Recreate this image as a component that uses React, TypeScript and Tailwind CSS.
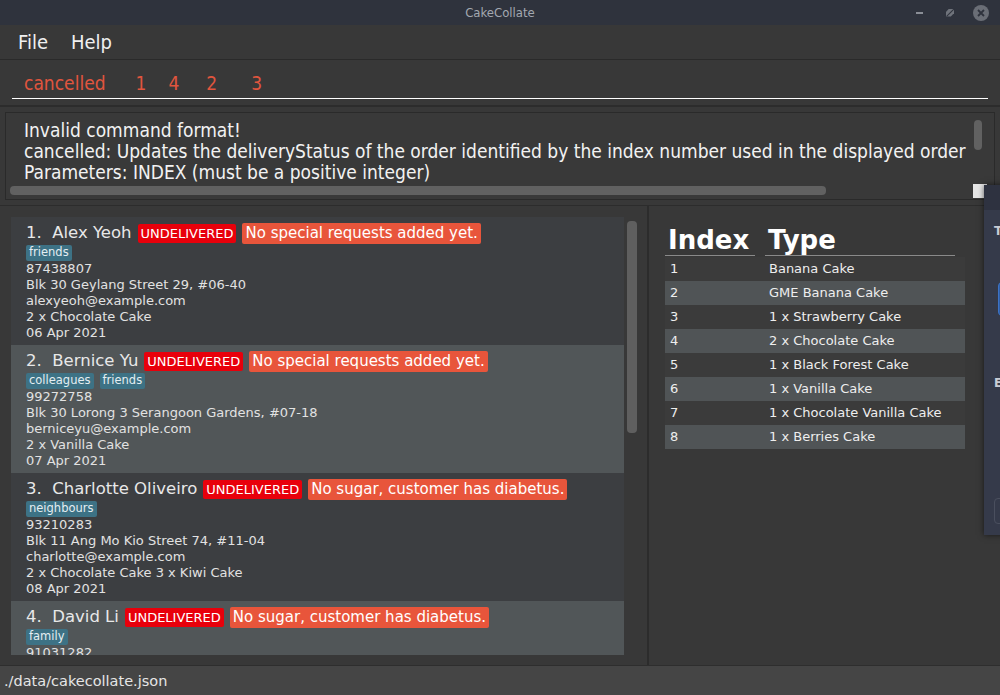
import React from "react";

const persons = [
  {
    n: 1,
    name: "Alex Yeoh",
    req: "No special requests added yet.",
    tags: ["friends"],
    phone: "87438807",
    addr: "Blk 30 Geylang Street 29, #06-40",
    email: "alexyeoh@example.com",
    order: "2 x Chocolate Cake",
    date: "06 Apr 2021",
  },
  {
    n: 2,
    name: "Bernice Yu",
    req: "No special requests added yet.",
    tags: ["colleagues", "friends"],
    phone: "99272758",
    addr: "Blk 30 Lorong 3 Serangoon Gardens, #07-18",
    email: "berniceyu@example.com",
    order: "2 x Vanilla Cake",
    date: "07 Apr 2021",
  },
  {
    n: 3,
    name: "Charlotte Oliveiro",
    req: "No sugar, customer has diabetus.",
    tags: ["neighbours"],
    phone: "93210283",
    addr: "Blk 11 Ang Mo Kio Street 74, #11-04",
    email: "charlotte@example.com",
    order: "2 x Chocolate Cake 3 x Kiwi Cake",
    date: "08 Apr 2021",
  },
  {
    n: 4,
    name: "David Li",
    req: "No sugar, customer has diabetus.",
    tags: ["family"],
    phone: "91031282",
    addr: "Blk 436 Serangoon Gardens Street 26, #16-43",
    email: "lidavid@example.com",
    order: "1 x Chocolate Cake",
    date: "09 Apr 2021",
  },
];

const items = [
  "Banana Cake",
  "GME Banana Cake",
  "1 x Strawberry Cake",
  "2 x Chocolate Cake",
  "1 x Black Forest Cake",
  "1 x Vanilla Cake",
  "1 x Chocolate Vanilla Cake",
  "1 x Berries Cake",
];

const ubuntu = "font-['DejaVu_Sans_Condensed','Liberation_Sans_Narrow','Liberation_Sans',sans-serif]";
const dejavu = "font-['DejaVu_Sans','Verdana',sans-serif]";

function Card({ p, even }: { p: (typeof persons)[number]; even: boolean }) {
  return (
    <div className={`h-[128px] shrink-0 pl-[15px] pt-[5px] ${even ? "bg-[#515658]" : "bg-[#3c3e41]"}`}>
      <div className="flex items-center h-[22px] gap-[6px]">
        <span className="text-[16.5px] text-[#e8e8e8] whitespace-pre leading-none">{`${p.n}.  ${p.name}`}</span>
        <span className="bg-[#e8000b] text-white text-[13px] leading-none px-[3px] py-[3px] rounded-[2px]">UNDELIVERED</span>
        <span className="bg-[#e8553b] text-white text-[15px] leading-none px-[3px] py-[3px] rounded-[2px]">{p.req}</span>
      </div>
      <div className="flex gap-[6px] mt-[1px] h-[16px] items-center">
        {p.tags.map((t) => (
          <span key={t} className="bg-[#3d7285] text-[#e4eef2] text-[11.5px] leading-none px-[3px] py-[2px] rounded-[2px]">
            {t}
          </span>
        ))}
      </div>
      <div className="text-[13px] leading-[16px] text-[#e2e2e2]">
        <div>{p.phone}</div>
        <div>{p.addr}</div>
        <div>{p.email}</div>
        <div>{p.order}</div>
        <div>{p.date}</div>
      </div>
    </div>
  );
}

export default function App() {
  return (
    <div className="w-[1000px] h-[695px] flex flex-col bg-[#383838] overflow-hidden relative">
      {/* title bar */}
      <div className={`h-[25px] shrink-0 bg-[#2f333d] flex items-center justify-center relative ${ubuntu}`}>
        <span className="text-[13px] text-[#a3a8b0]">CakeCollate</span>
        <div className="absolute right-[11px] top-0 h-[25px] flex items-center gap-[15px]">
          <div className="w-[7px] h-[2px] bg-[#8a8e96]" />
          <div className="w-[8px] h-[8px] relative ml-[8px]">
            <div className="absolute inset-0 bg-[#6f737b] [clip-path:polygon(0_40%,40%_0,100%_0,100%_60%,60%_100%,0_100%)]" />
            <div className="absolute left-[-1px] top-[3px] w-[11px] h-[1px] bg-[#2f333d] rotate-[-45deg]" />
          </div>
          <div className="w-[16px] h-[16px] rounded-full bg-[#6a6e76] flex items-center justify-center ml-[4px]">
            <svg width="8" height="8" viewBox="0 0 8 8">
              <path d="M1 1L7 7M7 1L1 7" stroke="#2f333d" strokeWidth="1.8" />
            </svg>
          </div>
        </div>
      </div>

      {/* menu bar */}
      <div className={`h-[34px] shrink-0 flex items-center gap-[23px] pl-[18px] text-[20px] text-[#f0f0f0] ${ubuntu}`}>
        <span>File</span>
        <span>Help</span>
      </div>

      {/* command box */}
      <div className="h-[46px] shrink-0 border-t border-[#2a2a2a] px-[12px] pt-[11px]">
        <div className={`h-[28px] border-b border-white pl-[12px] text-[19px] leading-[24px] text-[#e0553e] whitespace-pre flex ${ubuntu}`}>
          <span>cancelled</span>
          <span className="ml-[30px]">1</span>
          <span className="ml-[22px]">4</span>
          <span className="ml-[27px]">2</span>
          <span className="ml-[34px]">3</span>
        </div>
      </div>

      {/* result display */}
      <div className="h-[100px] shrink-0 border-t-[2px] border-[#2c2c2c] px-[5px] pt-[5px] pb-[5px]">
        <div className="relative h-[88px] border border-[#2a2a2a] bg-[#393939] overflow-hidden">
          <div className={`w-[964px] overflow-hidden pl-[18px] pt-[7px] text-[19px] leading-[21px] text-[#f2f2f2] whitespace-nowrap ${ubuntu}`}>
            <div>Invalid command format!</div>
            <div>cancelled: Updates the deliveryStatus of the order identified by the index number used in the displayed order list.</div>
            <div>Parameters: INDEX (must be a positive integer)</div>
          </div>
          <div className="absolute right-[12px] top-[7px] w-[8px] h-[30px] rounded-[4px] bg-[#616161]" />
          <div className="absolute left-[4px] top-[73px] w-[816px] h-[9px] rounded-[4px] bg-[#616161]" />
          <div className="absolute right-[7px] top-[71px] w-[14px] h-[14px] bg-[#e6e6e6]" />
        </div>
      </div>

      {/* main */}
      <div className="flex-1 flex border-t border-[#2c2c2c]">
        {/* left list */}
        <div className="w-[649px] shrink-0 border-r-[2px] border-[#2c2c2c] pl-[11px] pt-[11px] pb-[10px] flex">
          <div className={`w-[613px] h-[438px] overflow-hidden flex flex-col ${dejavu}`}>
            {persons.map((p, i) => (
              <Card key={p.n} p={p} even={i % 2 === 1} />
            ))}
          </div>
          <div className="pl-[3px] pt-[4px]">
            <div className="w-[10px] h-[212px] rounded-[4px] bg-[#5f5f5f]" />
          </div>
        </div>

        {/* right panel */}
        <div className={`flex-1 pl-[16px] pt-[18px] ${dejavu}`}>
          <div className="w-[300px]">
            <div className="flex h-[32px] items-end">
              <div className="w-[90px] border-b border-[#8a8a8a] text-[26px] font-bold leading-[30px] text-white pl-[3px]">Index</div>
              <div className="w-[190px] ml-[10px] border-b border-[#8a8a8a] text-[26px] font-bold leading-[30px] text-white pl-[3px]">Type</div>
            </div>
            <div className="mt-[1px]">
              {items.map((t, i) => (
                <div
                  key={i}
                  className={`flex h-[24px] items-center text-[13px] text-[#eeeeee] ${i % 2 === 1 ? "bg-[#505456]" : "bg-[#3b3b3b]"}`}
                >
                  <span className="w-[104px] pl-[5px]">{i + 1}</span>
                  <span>{t}</span>
                </div>
              ))}
            </div>
          </div>
        </div>
      </div>

      {/* status bar */}
      <div className={`h-[30px] shrink-0 bg-[#454545] border-t border-[#2e2e2e] flex items-center pl-[4px] text-[14.5px] leading-[18px] text-[#e6e6e6] ${dejavu}`}>
        ./data/cakecollate.json
      </div>

      {/* overlapping window on the right edge */}
      <div className="absolute left-[984px] top-[185px] w-[40px] h-[350px] bg-[#353a4a] shadow-[0_0_6px_rgba(0,0,0,0.6)]">
        <div className="h-[25px] bg-[#2e3240]" />
        <div className={`absolute left-[10px] top-[37px] text-[12px] font-bold text-[#c8ccd4] ${dejavu}`}>T</div>
        <div className="absolute left-[14px] top-[97px] w-[20px] h-[34px] rounded-[4px] bg-[#2f5fa8] border border-[#3d72c4]" />
        <div className={`absolute left-[10px] top-[189px] text-[12px] font-bold text-[#c8ccd4] ${dejavu}`}>E</div>
        <div className="absolute left-[10px] top-[313px] w-[20px] h-[26px] rounded-[4px] border border-[#4a4f5e]" />
      </div>
    </div>
  );
}
